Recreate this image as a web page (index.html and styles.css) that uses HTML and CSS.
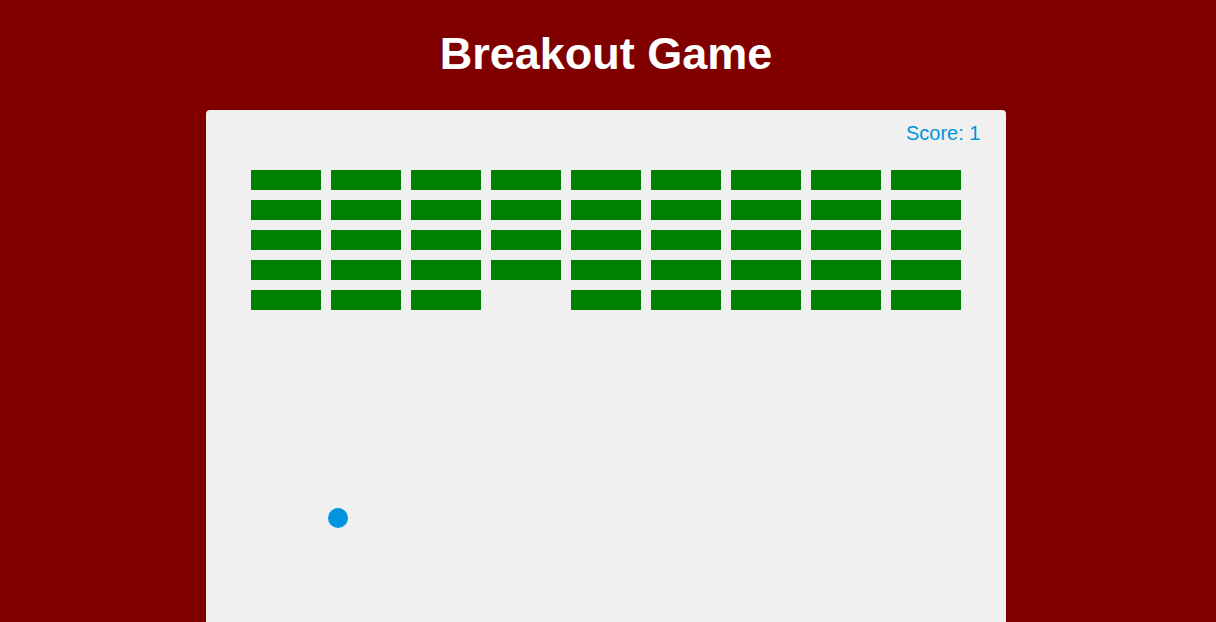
FILE: index.html
```html
<!DOCTYPE html>
<html lang="en">
<head>
<meta charset="utf-8">
<title>Breakout Game</title>
<link rel="stylesheet" href="styles.css">
</head>
<body>
  <h1 class="title">Breakout Game</h1>
  <div class="board">
    <div class="score">Score: 1</div>
    <div class="bricks">
      <div class="brick"></div><div class="brick"></div><div class="brick"></div><div class="brick"></div><div class="brick"></div><div class="brick"></div><div class="brick"></div><div class="brick"></div><div class="brick"></div>
      <div class="brick"></div><div class="brick"></div><div class="brick"></div><div class="brick"></div><div class="brick"></div><div class="brick"></div><div class="brick"></div><div class="brick"></div><div class="brick"></div>
      <div class="brick"></div><div class="brick"></div><div class="brick"></div><div class="brick"></div><div class="brick"></div><div class="brick"></div><div class="brick"></div><div class="brick"></div><div class="brick"></div>
      <div class="brick"></div><div class="brick"></div><div class="brick"></div><div class="brick"></div><div class="brick"></div><div class="brick"></div><div class="brick"></div><div class="brick"></div><div class="brick"></div>
      <div class="brick"></div><div class="brick"></div><div class="brick"></div><div class="brick brick-broken"></div><div class="brick"></div><div class="brick"></div><div class="brick"></div><div class="brick"></div><div class="brick"></div>
    </div>
    <div class="ball"></div>
  </div>
</body>
</html>
```
FILE: styles.css
```css
html, body {
  margin: 0;
  padding: 0;
}
body {
  background: #800000;
  font-family: "Liberation Sans", Arial, sans-serif;
  display: flex;
  flex-direction: column;
  align-items: center;
  padding-right: 4px;
  overflow: hidden;
}
.title {
  margin: 28px 0 0 0;
  height: 82px;
  font-size: 45px;
  line-height: 52px;
  font-weight: bold;
  color: #ffffff;
}
.board {
  position: relative;
  width: 800px;
  height: 600px;
  background: #f0f0f0;
  border-radius: 4px;
  box-sizing: border-box;
  padding: 60px 0 0 45px;
}
.score {
  position: absolute;
  left: 700px;
  top: 12px;
  font-size: 20px;
  line-height: 23px;
  color: #0095dd;
}
.bricks {
  display: grid;
  grid-template-columns: repeat(9, 70px);
  grid-auto-rows: 20px;
  gap: 10px;
}
.brick {
  background: #008000;
}
.brick-broken {
  visibility: hidden;
}
.ball {
  position: absolute;
  left: 122px;
  top: 398px;
  width: 20px;
  height: 20px;
  border-radius: 50%;
  background: #0095dd;
}
```
